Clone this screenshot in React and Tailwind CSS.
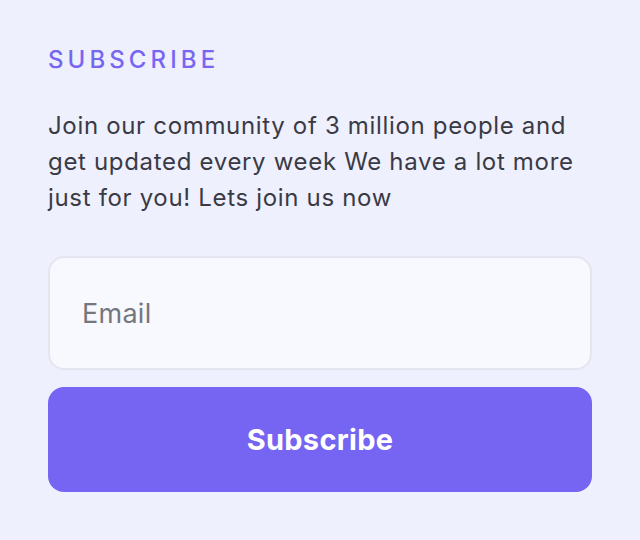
import React from 'react';

const SubscribeCard = () => {
  return (
    <div className="min-h-[540px] w-[640px] bg-[#eef0fd] px-12 pt-[44px] font-['Inter',sans-serif]">
      {/* Heading */}
      <h2 className="text-[24px] leading-[32px] font-medium tracking-[0.17em] text-[#7866f3]">
        SUBSCRIBE
      </h2>

      {/* Description */}
      <p className="mt-[32px] text-[24px] leading-[36px] text-[#3a3a45] tracking-[0.028em]">
        Join our community of 3 million people and get updated every week We have a lot more just for you! Lets join us now
      </p>

      {/* Email input + button */}
      <div className="mt-[40px] flex flex-col gap-[17px]">
        <input
          type="email"
          placeholder="Email"
          className="h-[114px] w-full rounded-[16px] border-2 border-[#e4e5ef] bg-[#f8f9fe] px-8 text-[27px] tracking-[0.01em] text-[#3a3a45] placeholder:text-[#76767e] outline-none"
        />
        <button className="h-[105px] w-full rounded-[16px] bg-[#7664f3] text-[29px] font-bold tracking-[0.01em] text-white">
          Subscribe
        </button>
      </div>
    </div>
  );
};

export default function App() {
  return <SubscribeCard />;
}
